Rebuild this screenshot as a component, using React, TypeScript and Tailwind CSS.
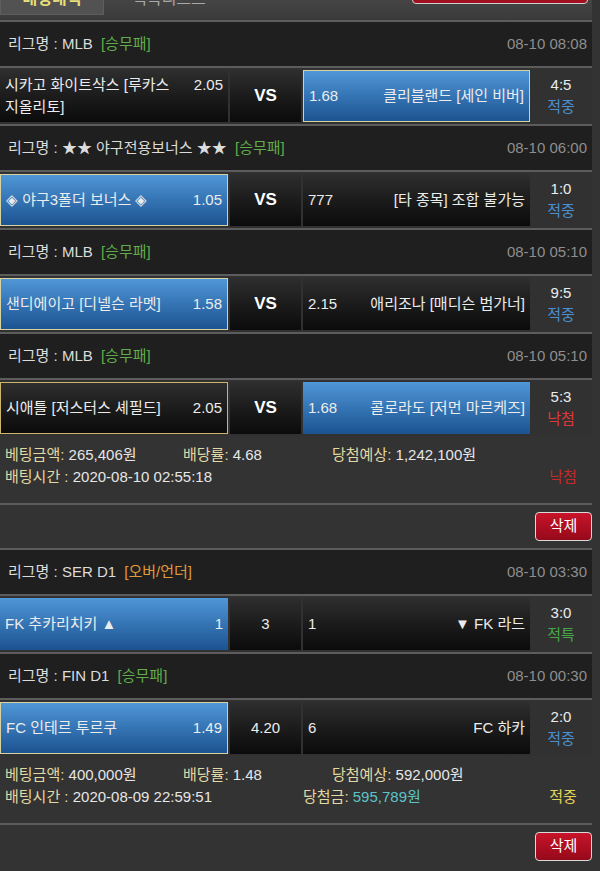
import React from "react";

type Side = { name: string; odds: string; style: "blue" | "dark"; border?: "beige" | "gold" };
type Match = {
  league: string;
  type: string;
  typeColor: string;
  date: string;
  left: Side;
  center: string;
  bold?: boolean;
  right: Side;
  score: string;
  result: string;
  resultColor: string;
};

const group1: Match[] = [
  {
    league: "MLB",
    type: "[승무패]",
    typeColor: "text-[#5fae4a]",
    date: "08-10 08:08",
    left: { name: "시카고 화이트삭스 [루카스 지올리토]", odds: "2.05", style: "dark" },
    center: "VS",
    bold: true,
    right: { name: "클리블랜드 [세인 비버]", odds: "1.68", style: "blue", border: "beige" },
    score: "4:5",
    result: "적중",
    resultColor: "text-[#4a8fd0]",
  },
  {
    league: "★★ 야구전용보너스 ★★",
    type: "[승무패]",
    typeColor: "text-[#5fae4a]",
    date: "08-10 06:00",
    left: { name: "◈ 야구3폴더 보너스 ◈", odds: "1.05", style: "blue", border: "beige" },
    center: "VS",
    bold: true,
    right: { name: "[타 종목] 조합 불가능", odds: "777", style: "dark" },
    score: "1:0",
    result: "적중",
    resultColor: "text-[#4a8fd0]",
  },
  {
    league: "MLB",
    type: "[승무패]",
    typeColor: "text-[#5fae4a]",
    date: "08-10 05:10",
    left: { name: "샌디에이고 [디넬슨 라멧]", odds: "1.58", style: "blue", border: "beige" },
    center: "VS",
    bold: true,
    right: { name: "애리조나 [매디슨 범가너]", odds: "2.15", style: "dark" },
    score: "9:5",
    result: "적중",
    resultColor: "text-[#4a8fd0]",
  },
  {
    league: "MLB",
    type: "[승무패]",
    typeColor: "text-[#5fae4a]",
    date: "08-10 05:10",
    left: { name: "시애틀 [저스터스 셰필드]", odds: "2.05", style: "dark", border: "gold" },
    center: "VS",
    bold: true,
    right: { name: "콜로라도 [저먼 마르케즈]", odds: "1.68", style: "blue" },
    score: "5:3",
    result: "낙첨",
    resultColor: "text-[#e03838]",
  },
];

const group2: Match[] = [
  {
    league: "SER D1",
    type: "[오버/언더]",
    typeColor: "text-[#e09a3a]",
    date: "08-10 03:30",
    left: { name: "FK 추카리치키 ▲", odds: "1", style: "blue" },
    center: "3",
    right: { name: "▼ FK 라드", odds: "1", style: "dark" },
    score: "3:0",
    result: "적특",
    resultColor: "text-[#45a845]",
  },
  {
    league: "FIN D1",
    type: "[승무패]",
    typeColor: "text-[#5fae4a]",
    date: "08-10 00:30",
    left: { name: "FC 인테르 투르쿠", odds: "1.49", style: "blue", border: "beige" },
    center: "4.20",
    right: { name: "FC 하카", odds: "6", style: "dark" },
    score: "2:0",
    result: "적중",
    resultColor: "text-[#4a8fd0]",
  },
];

function cellClass(s: Side) {
  const base =
    s.style === "blue"
      ? "bg-gradient-to-b from-[#4f97d8] to-[#1c5391]"
      : "bg-gradient-to-b from-[#2e2e2e] to-[#0b0b0b]";
  const border =
    s.border === "beige"
      ? "border border-[#d8d1a0]"
      : s.border === "gold"
      ? "border border-[#cdb46a]"
      : "";
  return `${base} ${border}`;
}

function Divider() {
  return <div className="h-[2px] bg-[#5c5c5c]" />;
}

function MatchBlock({ m }: { m: Match }) {
  return (
    <>
      <Divider />
      <div className="h-[44px] bg-[#1f1f1f] flex items-center justify-between pl-[8px] pr-[5px]">
        <div className="text-[15px] text-[#dcdcdc]">
          리그명 : {m.league} <span className={`ml-[4px] ${m.typeColor}`}>{m.type}</span>
        </div>
        <div className="text-[15px] text-[#8e8e8e]">{m.date}</div>
      </div>
      <Divider />
      <div className="h-[56px] bg-[#313131] flex py-[2px]">
        <div className={`w-[228px] flex items-center px-[5px] text-[15px] leading-[22px] text-[#ececec] ${cellClass(m.left)}`}>
          <div className="w-full break-keep">
            <span className="float-right ml-[6px]">{m.left.odds}</span>
            {m.left.name}
          </div>
        </div>
        <div className="w-[71px] ml-[2px] flex items-center justify-center bg-gradient-to-b from-[#2e2e2e] to-[#0b0b0b]">
          <span className={m.bold ? "text-[17px] font-bold text-white" : "text-[15px] text-[#ececec]"}>{m.center}</span>
        </div>
        <div className={`w-[227px] ml-[2px] flex items-center justify-between px-[5px] text-[15px] text-[#ececec] ${cellClass(m.right)}`}>
          <span>{m.right.odds}</span>
          <span className="break-keep">{m.right.name}</span>
        </div>
        <div className="flex-1 flex flex-col items-center justify-center text-[15px] leading-[22px]">
          <span className="text-[#ececec]">{m.score}</span>
          <span className={m.resultColor}>{m.result}</span>
        </div>
      </div>
    </>
  );
}

function Label({ children }: { children: React.ReactNode }) {
  return <span className="text-[#e2d9a2]">{children}</span>;
}

function DeleteBar() {
  return (
    <>
      <Divider />
      <div className="h-[43px] flex items-center justify-end">
        <button className="w-[57px] h-[29px] rounded-[4px] border border-[#d9d9d9] bg-gradient-to-b from-[#c8142a] to-[#96091a] text-white text-[15px]">
          삭제
        </button>
      </div>
    </>
  );
}

export default function App() {
  return (
    <div className="w-[600px] h-[871px] overflow-hidden bg-[#333333] [font-family:'Liberation_Sans','Noto_Sans_CJK_KR',sans-serif]">
      <div className="w-[592px]">
        {/* Tab bar (scrolled, partly hidden) */}
        <div className="h-[20px] overflow-hidden bg-gradient-to-b from-[#454545] to-[#3a3a3a]">
          <div className="-mt-[18px] h-[38px] flex items-start">
            <div className="w-[104px] h-[33px] bg-[#525252] border border-[#5e5e5e] flex items-center justify-center">
              <span className="text-[16px] font-bold text-[#e8df7a]">배팅내역</span>
            </div>
            <div className="w-[130px] h-[33px] flex items-center justify-center">
              <span className="text-[16px] text-[#a8a8a8]">적특리스트</span>
            </div>
            <div className="flex-1" />
            <div className="w-[176px] h-[22px] mr-[4px] rounded-[4px] border border-[#d0d0d0] bg-[#a0101f]" />
          </div>
        </div>

        {group1.map((m, i) => (
          <MatchBlock key={i} m={m} />
        ))}
        <div className="pt-[8px] pb-[15px] pl-[5px] text-[15px] leading-[22px] text-[#e6e6e6] bg-[#333333]">
          <div className="flex">
            <span className="w-[178px]">
              <Label>베팅금액:</Label> 265,406원
            </span>
            <span className="w-[149px]">
              <Label>배당률:</Label> 4.68
            </span>
            <span>
              <Label>당첨예상:</Label> 1,242,100원
            </span>
          </div>
          <div className="flex">
            <span className="w-[298px]">
              <Label>배팅시간 :</Label> 2020-08-10 02:55:18
            </span>
            <span className="flex-1" />
            <span className="w-[58px] text-center text-[#c42a2a]">낙첨</span>
          </div>
        </div>
        <DeleteBar />

        {group2.map((m, i) => (
          <MatchBlock key={i} m={m} />
        ))}
        <div className="pt-[8px] pb-[15px] pl-[5px] text-[15px] leading-[22px] text-[#e6e6e6] bg-[#333333]">
          <div className="flex">
            <span className="w-[178px]">
              <Label>베팅금액:</Label> 400,000원
            </span>
            <span className="w-[149px]">
              <Label>배당률:</Label> 1.48
            </span>
            <span>
              <Label>당첨예상:</Label> 592,000원
            </span>
          </div>
          <div className="flex">
            <span className="w-[298px]">
              <Label>배팅시간 :</Label> 2020-08-09 22:59:51
            </span>
            <span>
              <Label>당첨금:</Label> <span className="text-[#5cc4c8]">595,789원</span>
            </span>
            <span className="flex-1" />
            <span className="w-[58px] text-center text-[#e2d45a]">적중</span>
          </div>
        </div>
        <DeleteBar />
      </div>
    </div>
  );
}
